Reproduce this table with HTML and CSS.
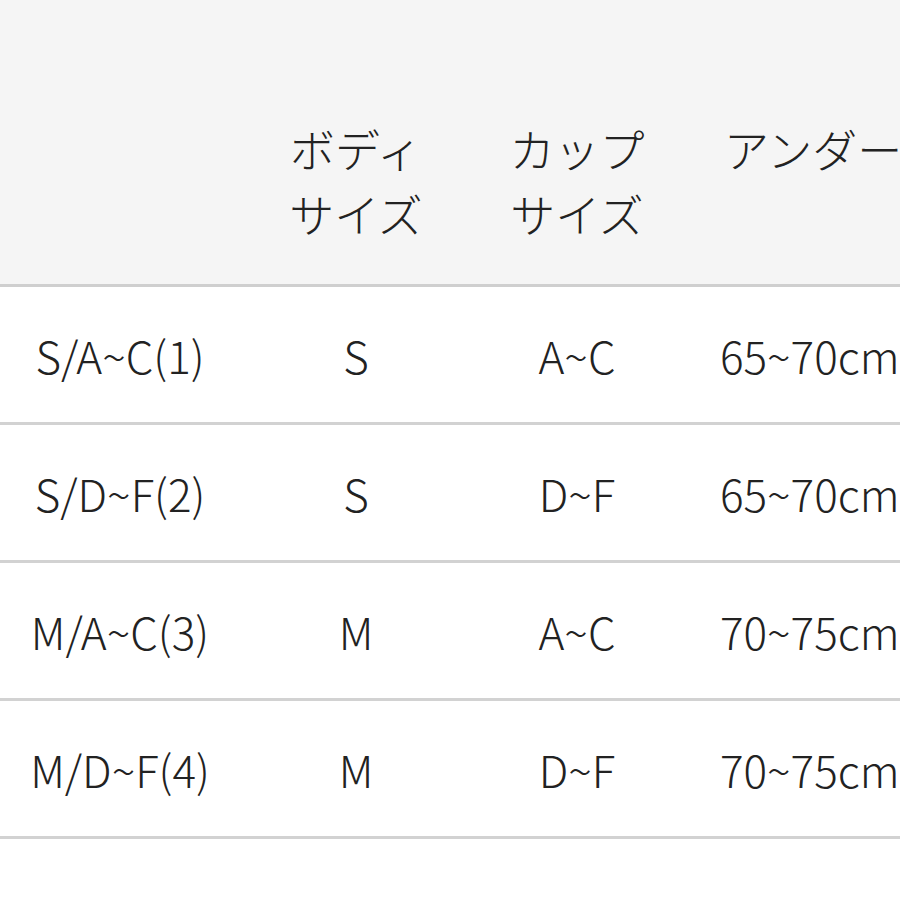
FILE: index.html
```html
<!DOCTYPE html>
<html lang="ja">
<head>
<meta charset="utf-8">
<link rel="stylesheet" href="styles.css">
</head>
<body>
<div class="wrap">
<table class="size-table">
<colgroup>
<col class="c1"><col class="c2"><col class="c3"><col class="c4">
</colgroup>
<thead>
<tr>
<th></th>
<th>ボディ<br>サイズ</th>
<th>カップ<br>サイズ</th>
<th class="left">アンダーバスト</th>
</tr>
</thead>
<tbody>
<tr><td>S/A~C(1)</td><td>S</td><td>A~C</td><td class="left">65~70cm</td></tr>
<tr><td>S/D~F(2)</td><td>S</td><td>D~F</td><td class="left">65~70cm</td></tr>
<tr><td>M/A~C(3)</td><td>M</td><td>A~C</td><td class="left">70~75cm</td></tr>
<tr><td>M/D~F(4)</td><td>M</td><td>D~F</td><td class="left">70~75cm</td></tr>
</tbody>
</table>
</div>
</body>
</html>
```
FILE: styles.css
```css
html, body {
  margin: 0;
  padding: 0;
  background: #ffffff;
}
.wrap {
  width: 900px;
  height: 900px;
  overflow: hidden;
}
.size-table {
  width: 1100px;
  table-layout: fixed;
  border-collapse: collapse;
  font-family: "Noto Sans CJK JP", "Noto Sans", sans-serif;
  font-weight: 300;
  color: #222222;
}
.c1 { width: 240px; }
.c2 { width: 232px; }
.c3 { width: 210px; }
.c4 { width: 418px; }
.size-table th {
  background: #f5f5f5;
  font-size: 45px;
  font-weight: 300;
  text-align: center;
  vertical-align: top;
  line-height: 65px;
  height: 130px;
  padding: 116px 0 38px;
  white-space: nowrap;
  border-bottom: 3px solid #cfcfcf;
}
.size-table td {
  font-size: 44px;
  text-align: center;
  vertical-align: middle;
  height: 135px;
  padding: 0;
  line-height: 1;
  white-space: nowrap;
  border-bottom: 3px solid #d2d2d2;
}
.size-table .left {
  text-align: left;
}
.size-table th.left { padding-left: 42px; }
.size-table td.left { padding-left: 38px; }
```
